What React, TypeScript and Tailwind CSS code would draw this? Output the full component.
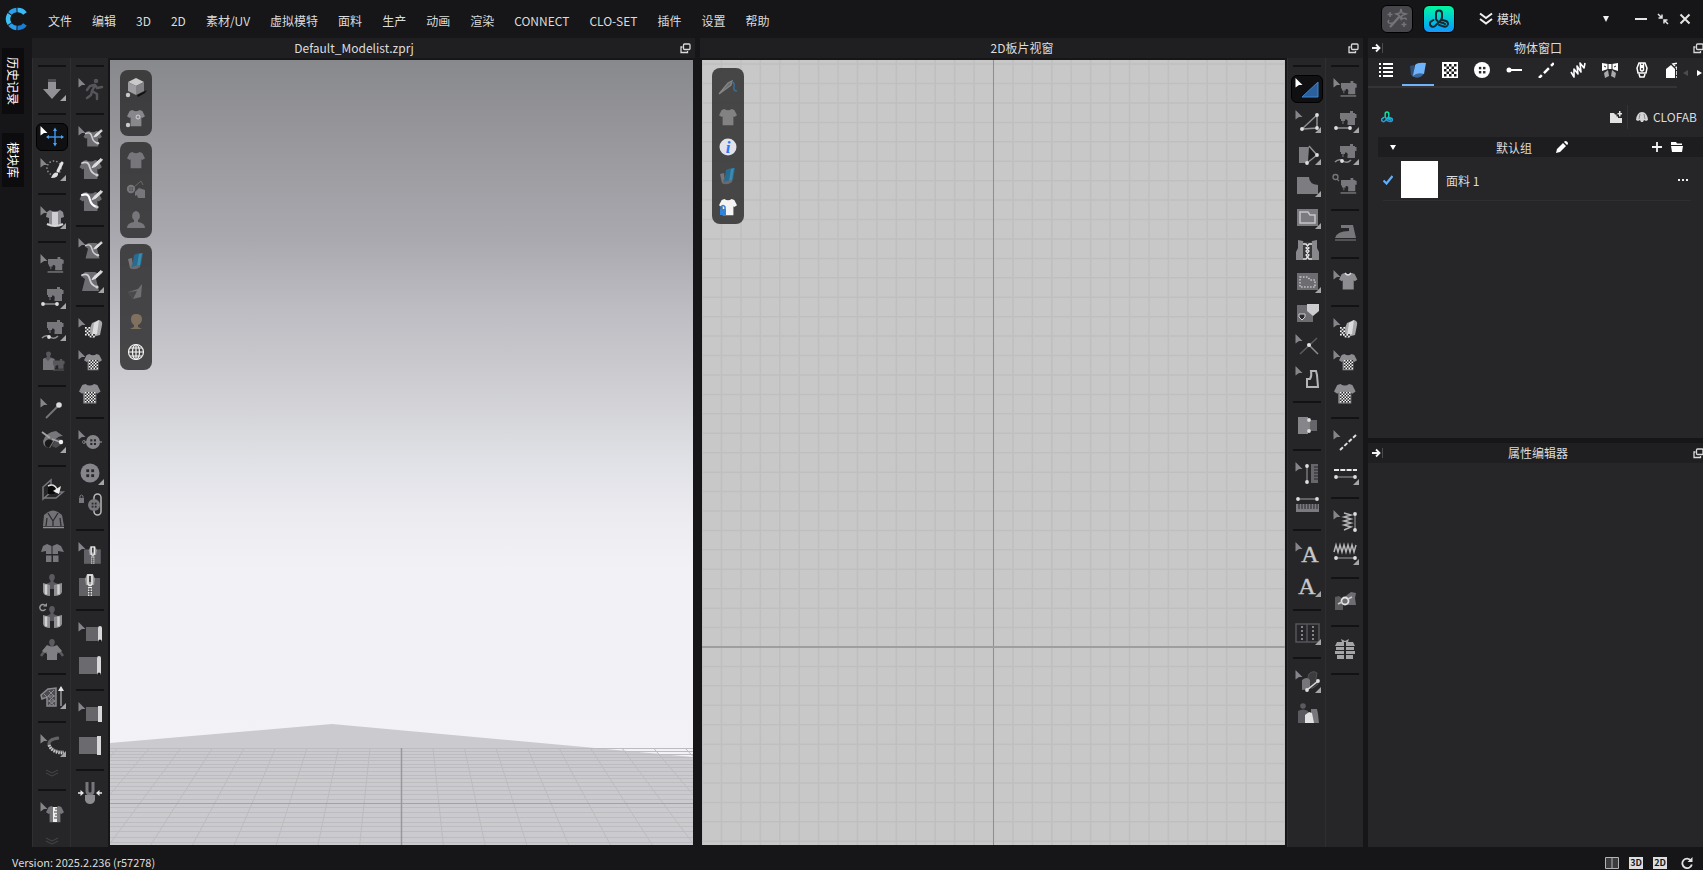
/**
 * App.tsx — CLO workspace shell: menu bar, 3D viewport, 2D pattern viewport,
 * object browser, property editor and status bar.
 *
 * Every toolbar icon is drawn on a 32×32 grid. The select arrow (top left) and
 * the "more tools" corner (bottom right) are added by <ToolButton>.
 */

import React from "react";

type Tool =
  | { kind: "sep" }
  | { kind: "more" }
  | { kind: "tool"; label: string; art: React.ReactNode; cursor?: boolean; corner?: boolean; active?: boolean };

const SEP: Tool = { kind: "sep" };
const MORE: Tool = { kind: "more" };

// flags: s = select arrow, c = corner triangle, a = active
const tool = (label: string, art: React.ReactNode, flags = ""): Tool => ({
  kind: "tool",
  label,
  art,
  cursor: flags.includes("s"),
  corner: flags.includes("c"),
  active: flags.includes("a"),
});

/* ---------- shared shapes ---------- */

interface ShapeProps {
  x: number;
  y: number;
  s?: number;
  fill?: string;
}

const TEE = "M6 0 Q10 3 14 0 L17 1 L20 7 L17 9 L16 8 V18 H4 V8 L3 9 L0 7 L3 1 Z";

const Tee: React.FC<ShapeProps> = ({ x, y, s = 1, fill = "#8c8c91" }) => (
  <path d={TEE} fill={fill} transform={`translate(${x} ${y}) scale(${s})`} />
);

const Machine: React.FC<ShapeProps & { base?: boolean }> = ({ x, y, s = 1, fill = "#77777c", base }) => (
  <g transform={`translate(${x} ${y}) scale(${s})`} fill={fill}>
    <path d="M0 2 H10 V0 H13 V2 H15 V3 H16.500 V7 H15 V14 H7.500 V12 Q8.500 8 5 8.500 V10 H3.500 V13 H2.500 V10 H1 V8 H0 Z" />
    {base && <path d="M-0.500 15 H16 V16.500 H-0.500 Z" />}
  </g>
);

const Checker: React.FC<{ x: number; y: number; cols: number; rows: number; size?: number }> = ({ x, y, cols, rows, size = 1.5 }) => (
  <g>
    <rect x={x} y={y} width={cols * size} height={rows * size} fill="#2a2a2c" />
    {Array.from({ length: cols * rows }, (_, i) => {
      const c = i % cols;
      const r = Math.floor(i / cols);
      return (c + r) % 2 === 0 ? <rect key={i} x={x + c * size} y={y + r * size} width={size} height={size} fill="#f6f6f6" /> : null;
    })}
  </g>
);

const Segment: React.FC<{ d: string; ends: number[][]; color?: string }> = ({ d, ends, color = "#8f8f93" }) => (
  <g>
    <path d={d} fill="none" stroke={color} strokeWidth="1.500" />
    {ends.map(([cx, cy]) => (
      <circle key={`${cx}-${cy}`} cx={cx} cy={cy} r="1.900" fill="#dededf" />
    ))}
  </g>
);

const Head: React.FC<{ x: number; y: number }> = ({ x, y }) => (
  <path d="M0 -4 C3.500 -4 3.500 1 1.500 2.500 V4 L6 6 V11 H-6 V6 L-1.500 4 V2.500 C-3.500 1 -3.500 -4 0 -4 Z" fill="#5b5b5f" transform={`translate(${x} ${y})`} />
);

/** Shirt with a drawn line and the pen that draws it */
const PenShirt: React.FC<{ small?: boolean; dress?: boolean; bright?: boolean }> = ({ small, dress, bright }) => (
  <g transform={small ? "translate(5 4) scale(.82)" : undefined}>
    {dress ? (
      <path d="M11 6 H21 L25 8 L22 13 L25 25 H8 L11 13 L7 10 Z" fill="#6e6e72" />
    ) : (
      <path d={TEE} fill="#6e6e72" transform="translate(5.500 6) scale(1.120 1.050)" />
    )}
    <path d="M8 9 C14 7 15 10 16 14 S19 20 23 21" fill="none" stroke={bright ? "#fff" : "#cfcfd1"} strokeWidth={bright ? 2.2 : 1.8} strokeLinecap="round" />
    <circle cx="23" cy="21" r="1.600" fill="#cfcfd1" />
    <path d="M18 13.500 L20 10.500 L27 4.500 L28.500 6 L21.500 12.500 Z" fill="#dededf" stroke="#dededf" />
  </g>
);

const FabricRoll: React.FC = () => (
  <g>
    <path d="M18 9 L25 6 Q29 7 28 11 L26 21 L18 23 Q14 20 16 14 Z" fill="#a9a9ac" />
    <path d="M20 9 L25 6 L23 20 L18 22 Z" fill="#dcdcdd" />
    <path d="M14 15 Q13 21 19 23 L21 21" fill="none" stroke="#8c8c90" strokeWidth="2" />
    <Checker x={11} y={13} cols={3} rows={5} size={1.7} />
    <Checker x={14} y={20} cols={4} rows={2} size={1.7} />
  </g>
);

const CheckerTee: React.FC<{ small?: boolean }> = ({ small }) =>
  small ? (
    <g>
      <Tee x={10} y={8} s={0.9} />
      <Checker x={15} y={14} cols={6} rows={6} />
    </g>
  ) : (
    <g>
      <Tee x={5} y={6} s={1.08} />
      <Checker x={11} y={14} cols={7} rows={7} />
    </g>
  );

const Button4: React.FC<{ cx: number; cy: number; r: number; hole?: string; fill?: string }> = ({ cx, cy, r, hole = "#2a2a2c", fill = "#85858a" }) => {
  const o = r * 0.26;
  return (
    <g>
      <circle cx={cx} cy={cy} r={r} fill={fill} />
      {[[-1, -1], [1, -1], [-1, 1], [1, 1]].map(([a, b]) => (
        <rect key={`${a}${b}`} x={cx + a * o - r * 0.13} y={cy + b * o - r * 0.13} width={r * 0.3} height={r * 0.3} fill={hole} />
      ))}
    </g>
  );
};

const Zipper: React.FC<{ small?: boolean }> = ({ small }) => (
  <g transform={small ? "translate(6 5) scale(.8)" : undefined}>
    <path d="M5 8 H26 V26 H5 Z" fill="#626266" />
    <path d="M13 4 H19 L21 9 L20 15 H12 L11 9 Z" fill="#9c9c9f" />
    <path d="M14 5 H18 V14 Q16 17 14 14 Z" fill="none" stroke="#e9e9ea" strokeWidth="1.500" />
    <path d="M16 6 V12" stroke="#2a2a2c" strokeWidth="1.500" />
    <path d="M16 17 V27" stroke="#e4e4e4" strokeWidth="4" strokeDasharray="1.500 1" />
    <path d="M16 18 V27" stroke="#333" strokeWidth="1" />
  </g>
);

const Piping: React.FC<{ small?: boolean; hole?: boolean }> = ({ small, hole }) =>
  small ? (
    <g>
      <rect x="12" y="9" width="12" height="14" fill="#66666a" />
      <rect x="24" y="8" width="4" height="16" rx={hole ? 2 : 0} fill="#d8d8da" />
      {hole && <circle cx="26" cy="23" r="1.500" fill="#1a1a1a" />}
    </g>
  ) : (
    <g>
      <rect x="5" y="7" width="18" height="17" fill="#6b6b6f" />
      <rect x="23" y="6" width="4" height="19" rx={hole ? 2 : 0} fill="#d8d8da" />
      {hole && <circle cx="25" cy="24" r="1.500" fill="#1a1a1a" />}
    </g>
  );

const WRAP = (
  <g>
    <Head x={16} y={8} />
    <path d="M7 13 L14 15 V26 Q8 26 7 22 Z" fill="#8f8f93" />
    <path d="M26 13 L18 15 V26 Q25 26 26 22 Z" fill="#8f8f93" />
    <path d="M10 14.500 V24.500 M22.500 14.500 V24.500" stroke="#d0d0d2" strokeWidth="2.500" />
  </g>
);

/* ---------- toolbars ---------- */

const LEFT_A: Tool[] = [
  SEP,
  tool("Simulate", (
    <g>
      <path d="M12 5 H20 V9 H12 Z" fill="#4e4e52" />
      <path d="M12 8 H20 V15 H25 L16 25 L7 15 H12 Z" fill="#919196" />
    </g>
  ), "c"),
  SEP,
  tool("Select / Move", (
    <g stroke="#3d8fe0" fill="#4aa3f0" strokeWidth="1.500">
      <path d="M11 15 H27 M19 7 V23" />
      <path d="M19 5.500 L21 9 H17 Z M19 24.500 L21 21 H17 Z M10 15 L13 13 V17 Z M28 15 L25 13 V17 Z" stroke="none" />
    </g>
  ), "sa"),
  tool("Brush select", (
    <g>
      <circle cx="18" cy="14" r="7" fill="none" stroke="#8e8e92" strokeWidth="1.500" strokeDasharray="1.500 2" />
      <path d="M26 9 L22 17" stroke="#e2e2e3" strokeWidth="3" strokeLinecap="round" />
      <path d="M15 24 Q18 17 22 19 Q23 24 15 24 Z" fill="#dededf" />
    </g>
  ), "sc"),
  SEP,
  tool("Fit garment", (
    <g>
      <path d="M14 8 Q19 11 24 8 L27 10 L28 15 L25 16 V23 H13 V16 L10 15 L11 10 Z" fill="#8d8d91" />
      <path d="M16 10 H22 V23 H16 Z" fill="#cfcfd1" />
      <path d="M11 22 Q19 26 27 22" stroke="#d6d6d8" strokeWidth="2" fill="none" />
    </g>
  ), "sc"),
  SEP,
  tool("Edit sewing", <Machine x={12} y={7} s={0.95} base />, "s"),
  tool("Segment sewing", (
    <g>
      <Machine x={11} y={5} />
      <Segment d="M7 22 H21" ends={[[7, 22], [21, 22]]} />
    </g>
  ), "c"),
  tool("Free sewing", (
    <g>
      <Machine x={11} y={6} />
      <Segment d="M6 24 Q10 20 14 23 T22 22" ends={[[13, 23]]} />
    </g>
  ), "c"),
  tool("Auto sewing", (
    <g>
      <path d="M10 8 a2.500 2.500 0 1 1 5 0 L14 11 L19 13 V24 H7 V13 L11 11 Z" fill="#58585c" />
      <path d="M9 12 L12 15 L15 12 L18 13 V24 H7 V13 Z" fill="#77777b" />
      <Machine x={17} y={13} s={0.7} fill="#58585c" base />
    </g>
  )),
  SEP,
  tool("Pin", (
    <g>
      <path d="M10 24 L22 12" stroke="#77777b" strokeWidth="1.800" />
      <circle cx="23" cy="11" r="2.800" fill="#dcdcdd" />
    </g>
  ), "s"),
  tool("Fold arrangement", (
    <g>
      <path d="M7 15 Q10 6 20 5 L27 10 Q22 10 19 14 L14 22 Q7 22 7 15 Z" fill="#77777b" />
      <path d="M20 13 Q25 11 26 18 L20 22 L16 20 Z" fill="#4c4c50" />
      <path d="M9 16 Q12 11 17 15 L13 22 Q8 21 9 16 Z" fill="#19191a" />
      <path d="M6 6 L14 12 M16 13 L24 16" stroke="#a4a4a7" strokeWidth="1.800" />
      <circle cx="25" cy="16" r="2.200" fill="#f0f0f0" />
    </g>
  ), "c"),
  SEP,
  tool("Reset 2D arrangement", (
    <g fill="none" stroke="#77777c" strokeWidth="1.500">
      <path d="M7 13 L15 6 V18 L7 25 Z M15 18 H27 L20 24 H8" />
      <path d="M12 12 Q18 9 22 15 L18 20 L12 20 Z" fill="#0b0b0c" stroke="none" />
      <path d="M12 12 Q18 9 21 15" stroke="#ddd" />
      <path d="M17 17 L25 12 L23 20 Z" fill="#eee" stroke="none" />
    </g>
  )),
  tool("Superimpose", (
    <g>
      <path d="M12 6 Q17 3 22 6 L26 9 L28 20 H7 L8 9 Z" fill="#727276" />
      <path d="M12 7 L17 15 L22 7 M17 15 V20 M11 12 L10 20 M24 12 L25 20" fill="none" stroke="#2e2e31" strokeWidth="1.300" />
      <path d="M7 21.500 H28" stroke="#8f8f93" strokeWidth="1.500" />
    </g>
  )),
  tool("Show pieces", (
    <g fill="#77777b">
      <path d="M11 6 L15.500 8 V16 H10 V13 L5 14 L7 8 Z M21 6 L16.500 8 V16 H22 V13 L28 14 L25 8 Z M10 17.500 H15.500 V24 H10 Z M17 17.500 H22.500 V24 H17 Z" />
    </g>
  )),
  tool("Arrangement points", WRAP),
  tool("Rearrange", (
    <g>
      {WRAP}
      <path d="M9 3.500 A3 3 0 1 0 9.500 7" stroke="#98989b" fill="none" strokeWidth="1.500" />
      <path d="M7 4.500 H11 V1 Z" fill="#98989b" />
    </g>
  )),
  tool("Drape", (
    <g>
      <Head x={16} y={9} />
      <path d="M5 22 L10 15 M27 22 L22 15" stroke="#5b5b5f" strokeWidth="2.500" />
      <path d="M11 11 L16 13 L21 11 L26 17 L23 19 L21 18 V26 H11 V18 L9 19 L6 17 Z" fill="#808084" />
    </g>
  )),
  SEP,
  tool("Lace", (
    <g>
      <path d="M12 7 L20 6 V24 H11 V15 L6 17 L5 13 Z" fill="#4c4c50" stroke="#8c8c90" strokeWidth="1.500" />
      <path d="M13 9 L18 14 L13 19 L18 23 M18 8 L12 14 L19 19 L13 23 M8 12 L11 15 M12 14 H19 M12 19 H19" fill="none" stroke="#8c8c90" strokeWidth="1" />
      <path d="M25 24 V9" stroke="#9a9a9d" strokeWidth="1.500" />
      <path d="M25 4 L28 9 H22 Z" fill="#e4e4e5" />
    </g>
  ), "c"),
  SEP,
  tool("Tape measure", (
    <g fill="none">
      <path d="M23 8 Q12 9 13 15 Q16 22 28 22" stroke="#636367" strokeWidth="3" />
      <path d="M13 15 Q16 23 28 23" stroke="#c9c9cb" strokeWidth="3" strokeDasharray="1.500 1" />
    </g>
  ), "sc"),
  MORE,
  SEP,
  tool("Garment measure", (
    <g>
      <Tee x={10} y={8} s={0.9} fill="#77777b" />
      <path d="M17 9 H21 V24 H17 Z" fill="#ededee" />
      <path d="M19 11 H21 M18 14 H21 M19 17 H21 M18 20 H21" stroke="#444" />
    </g>
  ), "s"),
  MORE,
];

const LEFT_B: Tool[] = [
  SEP,
  tool("Walk", (
    <g fill="none" stroke="#56565a" strokeWidth="2.500" strokeLinecap="round" strokeLinejoin="round">
      <circle cx="22" cy="7" r="1" />
      <path d="M21 11 L18 17 L23 20 V25 M18 17 L17 21 L13 24 M20 11 L16 12 L13 16 M21 11 L23 14 L28 13" />
    </g>
  ), "s"),
  SEP,
  tool("Edit 3D line", <PenShirt small />, "s"),
  tool("3D pen", <PenShirt />),
  tool("3D pen (garment)", <PenShirt bright />),
  SEP,
  tool("Edit avatar line", <PenShirt small dress />, "s"),
  tool("Avatar pen", <PenShirt dress />, "c"),
  SEP,
  tool("Edit texture", <FabricRoll />, "s"),
  tool("Transform graphic", <CheckerTee small />, "s"),
  tool("Graphic", <CheckerTee />),
  SEP,
  tool("Edit button", (
    <g>
      <path d="M10 16 H28" stroke="#77777b" strokeWidth="1.500" />
      <circle cx="10" cy="16" r="1.500" fill="none" stroke="#77777b" />
      <Button4 cx={19} cy={16} r={7} />
    </g>
  ), "s"),
  tool("Button", <Button4 cx={16} cy={15} r={9.5} />, "c"),
  tool("Fasten button", (
    <g>
      <path d="M5 8 H10 V13 H5 Z" fill="#77777b" />
      <path d="M6 8 V6 Q7.500 4 9 6 V8" fill="none" stroke="#77777b" />
      <rect x="20" y="4" width="7" height="21" rx="3.500" fill="none" stroke="#b8b8ba" strokeWidth="1.500" />
      <Button4 cx={20} cy={15} r={6} fill="#77777b" />
    </g>
  )),
  SEP,
  tool("Edit zipper", <Zipper small />, "s"),
  tool("Zipper", <Zipper />),
  SEP,
  tool("Edit piping", <Piping small hole />, "s"),
  tool("Piping", <Piping hole />),
  SEP,
  tool("Edit binding", <Piping small />, "s"),
  tool("Binding", <Piping />),
  SEP,
  tool("Steam", (
    <g>
      <path d="M13 4 V13 Q13 16 16 16 Q19 16 19 13 V4" stroke="#77777b" strokeWidth="3" fill="none" />
      <path d="M11 17 H21 V22 Q20 26 16 26 Q12 26 11 22 Z" fill="#8d8d91" />
      <path d="M4 15 H7 M25 15 H28" stroke="#e8e8e8" strokeWidth="1.500" />
      <path d="M6.500 12 L10 15 L6.500 18 Z M25.500 12 L22 15 L25.500 18 Z" fill="#e8e8e8" />
    </g>
  )),
];

const LETTER_A = (x: number, y: number) => (
  <text x={x} y={y} textAnchor="middle" fontSize="24" fontFamily="Liberation Serif, serif" fill="#c9c9cb" stroke="#c9c9cb" strokeWidth=".4">
    A
  </text>
);

const RIGHT_A: Tool[] = [
  SEP,
  tool("Transform pattern", <path d="M11 23 L27 8 V23 Z" fill="#2b5f9e" stroke="#3d87cf" />, "sa"),
  tool("Edit pattern", <Segment d="M11 23 L26 9 V22 Z" ends={[[11, 23], [26, 9], [26, 22]]} />, "sc"),
  tool("Fold", (
    <g>
      <path d="M8 9 H18 V25 H8 Z" fill="#808084" />
      <path d="M18 9 L26 17 L17 24 Z" fill="#1c1c1e" />
      <Segment d="M18 8 L26 17 L16 25" ends={[[26, 17], [16, 25]]} />
    </g>
  ), "c"),
  tool("Polygon", <path d="M6 7 H18 Q18 14 27 15 V24 H6 Z" fill="#7d7d81" />, "c"),
  tool("Internal polygon", (
    <g>
      <path d="M6 7 H27 V24 H6 Z" fill="#7b7b7f" />
      <path d="M9 10 H17 L19 13 H24 V21 H9 Z" fill="none" stroke="#c5c5c7" strokeWidth="1.500" />
    </g>
  ), "c"),
  tool("Lacing", (
    <g>
      <path d="M7 6 L12 7 L14 11 V26 H5 V18 L7 14 Z M26 6 L21 7 L19 11 V26 H28 V18 L26 14 Z" fill="#88888c" />
      <path d="M12 8 H21 V26 H12 Z" fill="#39393c" />
      <path d="M12 10 H15 L18 14 L15 17 L18 21 L15 25 H12 M21 10 H18 L15 14 L18 17 L15 21 L18 25 H21" stroke="#e4e4e5" strokeWidth="1.300" fill="none" />
    </g>
  )),
  tool("Base line", (
    <g>
      <path d="M6 7 H27 V24 H6 Z" fill="#6d6d71" />
      <path d="M9 11 H17 L19 14 H24 V21 H9 Z" fill="none" stroke="#c5c5c7" strokeWidth="1.500" strokeDasharray="1.500 1.500" />
    </g>
  ), "c"),
  tool("Pocket", (
    <g>
      <path d="M6 7 H22 V24 H6 Z" fill="#6d6d71" />
      <path d="M16 6 H28 V13 L22 18 L16 13 Z" fill="#cdcdcf" />
      <path d="M8 16 H14 V19 L11 22 L8 19 Z" fill="#2a2a2c" stroke="#d0d0d2" />
    </g>
  )),
  tool("Notch", (
    <g>
      <path d="M9 24 L26 8" stroke="#5b5b5f" strokeWidth="1.500" />
      <path d="M18 15 L27 24" stroke="#8c8c90" strokeWidth="1.500" />
      <circle cx="18" cy="15" r="2" fill="#e4e4e5" />
    </g>
  ), "s"),
  tool("Seam allowance", <path d="M16 25 V17 H19 Q21 14 20 9 H25 L26 13 L27 25 Z" fill="none" stroke="#b5b5b7" strokeWidth="2" />, "s"),
  SEP,
  tool("Symmetry", (
    <g>
      <path d="M7 7 H17 V24 H7 Z" fill="#85858a" />
      <path d="M17 10 H26 V21 H17 Z" fill="#66666a" />
      <Segment d="M18 10 V21" ends={[[18, 10], [18, 21]]} />
    </g>
  )),
  SEP,
  tool("Edit 2D measure", (
    <g>
      <Segment d="M16 8 V24" ends={[[16, 8], [16, 24]]} color="#77777b" />
      <path d="M20 6 H27 V25 H20 Z" fill="#67676b" />
      <path d="M23 9 H27 M23 12 H27 M23 15 H27 M23 18 H27 M23 21 H27" stroke="#27272a" />
    </g>
  ), "s"),
  tool("2D measure", (
    <g>
      <Segment d="M7 9 H26" ends={[[7, 9], [26, 9]]} color="#77777b" />
      <path d="M5 14 H28 V22 H5 Z" fill="#7b7b7f" />
      <path d="M8 14 V19 M11 14 V19 M14 14 V19 M17 14 V19 M20 14 V19 M23 14 V19 M26 14 V19" stroke="#27272a" />
    </g>
  )),
  SEP,
  tool("Edit annotation", LETTER_A(19, 24), "s"),
  tool("Annotation", LETTER_A(16, 24), "c"),
  SEP,
  tool("Pleats", (
    <g fill="none" stroke="#56565a" strokeWidth="1.500">
      <path d="M5 6 H28 V24 H5 Z M16 6 V24" />
      <path d="M11 8 V22 M22 8 V22" stroke="#a5a5a8" strokeDasharray="2 2" />
    </g>
  ), "c"),
  SEP,
  tool("Grading", (
    <g>
      <path d="M18 8 Q22 4 26 7 L25 12 L27 18 L22 22 H14 Z" fill="#3c3c3f" stroke="#525256" />
      <path d="M11 14 Q16 10 19 14 V23 L11 24 Z" fill="#77777b" />
      <Segment d="M16 24 L27 15" ends={[[16, 24], [27, 15]]} color="#dcdcdd" />
    </g>
  ), "sc"),
  tool("Avatar pieces", (
    <g>
      <circle cx="12" cy="8" r="2.800" fill="#5b5b5f" />
      <path d="M7 13 Q12 10 17 13 V25 H7 Z" fill="#5b5b5f" />
      <path d="M20 11 H26 L27 16 L28 25 H20 Z" fill="#77777b" />
      <path d="M14 17 L18 14 L21 15 L23 25 H14 Z" fill="#e2e2e3" />
    </g>
  )),
];

const RIGHT_B: Tool[] = [
  SEP,
  tool("Edit sewing 2D", <Machine x={12} y={7} s={0.95} base />, "s"),
  tool("Segment sewing 2D", (
    <g>
      <Machine x={11} y={5} />
      <Segment d="M7 22 H21" ends={[[7, 22], [21, 22]]} />
    </g>
  ), "c"),
  tool("Free sewing 2D", (
    <g>
      <Machine x={11} y={6} />
      <Segment d="M6 24 Q10 20 14 23 T22 22" ends={[[13, 23]]} />
    </g>
  ), "c"),
  tool("Check sewing length", (
    <g>
      <Machine x={12} y={8} s={0.95} base />
      <circle cx="6.500" cy="7" r="2.500" fill="none" stroke="#77777b" strokeWidth="1.300" />
      <path d="M8 9 L10 11" stroke="#77777b" strokeWidth="1.300" />
    </g>
  )),
  SEP,
  tool("Iron", (
    <g>
      <path d="M12 7 H24 L27 20 H6 Q8 13 20 13 V10 H12 Z" fill="#77777b" />
      <path d="M6 22 H27" stroke="#626266" strokeWidth="1.500" />
    </g>
  )),
  SEP,
  tool("Edit fabric", (
    <g>
      <Tee x={10} y={7} s={0.92} />
      <path d="M16 7 Q19 11 22 7" fill="none" stroke="#dededf" strokeWidth="1.500" />
    </g>
  ), "s"),
  SEP,
  tool("Edit texture 2D", <FabricRoll />, "s"),
  tool("Transform graphic 2D", <CheckerTee small />, "s"),
  tool("Graphic 2D", <CheckerTee />),
  SEP,
  tool("Edit topstitch", <path d="M11 24 L28 8" stroke="#dededf" strokeWidth="2" strokeDasharray="4 2" />, "s"),
  tool("Segment topstitch", (
    <g>
      <path d="M5 12 H28" stroke="#e8e8e8" strokeWidth="2" strokeDasharray="5 1.300" />
      <Segment d="M7 19 H26" ends={[[7, 19], [26, 19]]} color="#77777b" />
    </g>
  ), "c"),
  SEP,
  tool("Edit shirring", (
    <g>
      <path d="M15 7 L22 9 L15 11 L22 13 L15 15 L22 17 L15 19 L22 21 L15 24" fill="none" stroke="#b5b5b7" strokeWidth="1.500" />
      <Segment d="M26 8 V24" ends={[[26, 8], [26, 24]]} color="#77777b" />
    </g>
  ), "s"),
  tool("Segment shirring", (
    <g>
      <path d="M5 14 L7 7 L9 14 L11 7 L13 14 L15 7 L17 14 L19 7 L21 14 L23 7 L25 14 L27 7" fill="none" stroke="#b5b5b7" strokeWidth="1.500" />
      <Segment d="M7 20 H26" ends={[[7, 20], [26, 20]]} color="#77777b" />
    </g>
  ), "c"),
  SEP,
  tool("Trim link", (
    <g>
      <path d="M6 11 L10 10 L14 13 V24 H6 Z" fill="#5b5b5f" />
      <path d="M18 9 L22 6 L27 7 L26 12 L27 19 H14 V13 Z" fill="#6e6e72" />
      <circle cx="16" cy="15" r="3.500" fill="none" stroke="#e4e4e5" strokeWidth="1.800" />
      <path d="M9 18 L13 16 M19 13 L23 11" stroke="#c9c9cb" strokeWidth="1.800" />
    </g>
  )),
  SEP,
  tool("Pack", (
    <g fill="#a5a5a8">
      <path d="M12 5 L16 7 L20 5 L19 8 H13 Z" />
      <path d="M8 8 H15 V12 H6 Z M17 8 H24 L26 12 H17 Z M7 13 H15 V16 H7 Z M17 13 H25 V16 H17 Z M6 17 H15 V20 H6 Z M17 17 H26 V20 H17 Z M8 21 H15 V25 H8 Z M17 21 H24 V25 H17 Z" />
    </g>
  )),
  SEP,
];

const ToolButton: React.FC<{ item: Tool }> = ({ item }) => {
  if (item.kind === "sep") {
    return (
      <div className="flex h-4 shrink-0 items-center">
        <hr className="w-7 border-t-2 border-[#121214]" />
      </div>
    );
  }
  if (item.kind === "more") {
    return (
      <svg className="h-5 w-4 shrink-0" viewBox="0 0 16 20" fill="none" stroke="#46464a" aria-hidden="true">
        <path d="M2 8 L8 11 L14 8 M2 11 L8 14 L14 11" />
      </svg>
    );
  }
  return (
    <button type="button" aria-label={item.label} className="relative flex h-8 w-8 shrink-0 items-center justify-center">
      {item.active && <span className="absolute inset-x-0 top-px h-7 rounded-md border border-black bg-[#101012]" />}
      <svg className="relative h-8 w-8" viewBox="0 0 32 32" aria-hidden="true">
        {item.art}
        {item.cursor && <path d="M4.500 4 L11.500 11 H8 L4.500 13.500 Z" fill={item.active ? "#fff" : "#85858a"} />}
        {item.corner && <path d="M24 27 L30 21 V27 Z" fill="#a5a5a8" />}
      </svg>
    </button>
  );
};

const Toolbar: React.FC<{ tools: Tool[]; label: string }> = ({ tools, label }) => (
  <div role="toolbar" aria-label={label} className="flex flex-1 flex-col items-center overflow-hidden border-l border-[#2f2f32] bg-[#262629]">
    {tools.map((t, i) => (
      <ToolButton key={i} item={t} />
    ))}
  </div>
);

/* ---------- viewport palettes ---------- */

const SHEET = (
  <g>
    <path d="M7 12 L11 11 L12 22 L9 21 Z" fill="#77777b" />
    <path d="M9 21 Q14 24 19 20 L20 14 H12 Z" fill="#6a6a6e" />
    <path d="M13 8 Q16 6 22 6 L20 18 Q15 18 11 20 Z" fill="#276b93" />
    <path d="M18 7 L21 6 L19 18 L16 18.500 Z" fill="#3c8bab" />
  </g>
);

const PALETTE_3D: { label: string; art: React.ReactNode }[][] = [
  [
    {
      label: "Display environment",
      art: (
        <g>
          <path d="M16 22 L26 17 L24 20 L17 24 Z" fill="#111" />
          <path d="M15 5 L23 9 L15 13 L7 9 Z" fill="#c9c9cb" />
          <path d="M7 9 L15 13 V22 L7 18 Z" fill="#9d9da0" />
          <path d="M23 9 L15 13 V22 L23 18 Z" fill="#828286" />
          <circle cx="7" cy="22" r="2.200" fill="#c9c9cb" />
        </g>
      ),
    },
    {
      label: "Display garment",
      art: (
        <g>
          <Tee x={6} y={7} s={0.9} fill="#88888c" />
          <circle cx="17" cy="14" r="2" fill="none" stroke="#d0d0d2" />
          <circle cx="7" cy="22" r="2.200" fill="#c9c9cb" />
        </g>
      ),
    },
  ],
  [
    { label: "Garment", art: <Tee x={6} y={7} s={0.9} fill="#77777b" /> },
    {
      label: "Trims",
      art: (
        <g>
          <Button4 cx={10} cy={14} r={4.2} hole="#444" fill="#77777b" />
          <path d="M13 12 L20 6 L22 10" stroke="#68686c" fill="none" />
          <path d="M14 17 L18 13 L24 15 V23 H17 L16 20 L14 21 Z" fill="#77777b" />
        </g>
      ),
    },
    { label: "Avatar", art: <path d="M15 6 a4.500 5 0 0 1 2 9 V17 Q24 18 24 23 H6 Q6 18 13 17 V15 A4.500 5 0 0 1 15 6 Z" fill="#77777b" /> },
  ],
  [
    { label: "Fabric texture", art: SHEET },
    {
      label: "Fabric thickness",
      art: (
        <g>
          <path d="M7 15 L17 12 L21 7 L20 20 L12 22 Z" fill="#707074" />
          <path d="M7 15 L16 14 L12 22 Z" fill="#4a4a4c" />
        </g>
      ),
    },
    { label: "Avatar texture", art: <path d="M15 7 Q21 7 21 12 Q21 16 17 18 V20 L21 22 H9 L13 20 V18 Q10 16 10 12 Q10 7 15 7 Z" fill="#80705f" /> },
    {
      label: "Grid",
      art: (
        <g fill="none" stroke="#f4f4f4" strokeWidth="1.200">
          <circle cx="15" cy="15" r="7.500" />
          <ellipse cx="15" cy="15" rx="3.500" ry="7.500" />
          <path d="M15 7.500 V22.500 M7.500 15 H22.500 M9 11 H21 M9 19 H21" />
        </g>
      ),
    },
  ],
];

const PALETTE_2D = [
  {
    label: "Show sewing",
    art: (
      <g fill="none">
        <path d="M6 23 L15 12 L19 10 L18 14 Z" stroke="#858585" strokeWidth="1.300" fill="#6c6c6c" />
        <path d="M19 11 Q22 12 21 16 T24 20" stroke="#3c6e92" strokeWidth="1.500" />
      </g>
    ),
  },
  { label: "Show garment", art: <Tee x={6} y={8} s={0.9} fill="#828282" /> },
  {
    label: "Show information",
    art: (
      <g>
        <circle cx="15" cy="16" r="8.500" fill="#e2e2ea" />
        <text x="15" y="22" textAnchor="middle" fontSize="17" fontStyle="italic" fontWeight="bold" fontFamily="Liberation Serif, serif" fill="#2b76f6">
          i
        </text>
      </g>
    ),
  },
  { label: "Show texture", art: <g transform="translate(0 1)">{SHEET}</g> },
  {
    label: "Lock pattern",
    art: (
      <g>
        <Tee x={6} y={8} s={0.9} fill="#f4f4f4" />
        <path d="M7 18 H13 V24 H7 Z" fill="#2f83d8" />
        <path d="M8 18 V16 Q10 13 12 16 V18" fill="none" stroke="#2f83d8" strokeWidth="1.500" />
      </g>
    ),
  },
];

const Palette: React.FC<{ items: { label: string; art: React.ReactNode }[] }> = ({ items }) => (
  <div className="flex w-8 flex-col items-center rounded-lg bg-[#2f2f30]/85 py-[3px]">
    {items.map((it) => (
      <button key={it.label} type="button" aria-label={it.label}>
        <svg className="h-[30px] w-[30px]" viewBox="0 0 30 30" aria-hidden="true">
          {it.art}
        </svg>
      </button>
    ))}
  </div>
);

/* ---------- viewport backdrops ---------- */

// y positions of the floor lines, closing up towards the horizon
const FLOOR_ROWS = [688, 691, 694, 697, 700, 704, 707, 711, 715, 718, 722, 726, 730, 734, 739, 747, 752, 757, 762, 766, 771, 777, 782];

const Floor: React.FC = () => (
  <svg className="absolute inset-0 h-full w-full" viewBox="0 0 583 785" preserveAspectRatio="xMidYMax slice" aria-hidden="true">
    <path d="M0 683 L222 664 L583 697 V785 H0 Z" fill="#cbcacf" />
    <g stroke="#bcbcbe" strokeWidth="1">
      {FLOOR_ROWS.map((y) => (
        <path key={y} d={`M0 ${y}.5 H583`} />
      ))}
      {Array.from({ length: 21 }, (_, i) => i - 10).map((n) => (
        <path key={n} d={`M${291.5 + n * 31.5} 688 L${291.5 + n * 41.8} 785`} />
      ))}
    </g>
    <path d="M0 743.500 H583" stroke="#a2a2a3" />
    <path d="M291.500 688 V785" stroke="#98989a" strokeWidth="1.500" />
  </svg>
);

const GRID_STEP = 19.43;

const PatternGrid: React.FC = () => (
  <svg className="absolute inset-0 h-full w-full" viewBox="0 0 583 785" preserveAspectRatio="xMidYMid slice" aria-hidden="true">
    <g stroke="#bfbfbf" strokeWidth="1.500">
      {Array.from({ length: 31 }, (_, i) => 291.5 + (i - 15) * GRID_STEP).map((x) => (
        <path key={x} d={`M${x} 0 V785`} />
      ))}
      {Array.from({ length: 42 }, (_, i) => 587 + (i - 31) * GRID_STEP).map((y) => (
        <path key={y} d={`M0 ${y} H583`} />
      ))}
    </g>
    <path d="M291.500 0 V785" stroke="#8f8f8f" />
    <path d="M0 587 H583" stroke="#9e9e9e" strokeWidth="2" />
  </svg>
);

/* ---------- chrome ---------- */

const PopOutIcon: React.FC = () => (
  <svg className="h-[11px] w-[11px]" viewBox="0 0 11 11" fill="none" stroke="#d8d8d8" strokeWidth="1.300" aria-hidden="true">
    <rect x="3.500" y="1" width="6.500" height="5.500" rx="1" />
    <path d="M2.500 4 H1 V9.500 H7.500 V8" />
  </svg>
);

const PanelHeader: React.FC<{ title: string; dock?: boolean }> = ({ title, dock }) => (
  <header className="flex h-5 shrink-0 items-center bg-[#1f1f22]">
    {dock && (
      <button type="button" aria-label="Collapse panel" className="w-[19px] pl-[3px]">
        <svg className="h-3 w-3" viewBox="0 0 12 12" fill="none" stroke="#f4f4f4" strokeWidth="1.800" aria-hidden="true">
          <path d="M1 6 H8 M5 2.500 L8.500 6 L5 9.500" />
          <path d="M11.500 1 V11" stroke="#4a4a4d" strokeWidth="1" />
        </svg>
      </button>
    )}
    <h2 className="flex-1 text-center leading-5">{title}</h2>
    <button type="button" aria-label={`Undock ${title}`} className="flex w-[19px] justify-center">
      <PopOutIcon />
    </button>
  </header>
);

/** Trefoil knot used by the simulate button and the connect link */
const Knot: React.FC<{ className: string; stroke: string; width?: number }> = ({ className, stroke, width = 2 }) => (
  <svg className={className} viewBox="0 0 20 20" fill="none" stroke={stroke} strokeWidth={width} strokeLinecap="round" aria-hidden="true">
    <defs>
      <linearGradient id="knot" x1="0" y1="0" x2="0" y2="20" gradientUnits="userSpaceOnUse">
        <stop stopColor="#00f58c" />
        <stop offset=".5" stopColor="#18c4c8" />
        <stop offset="1" stopColor="#2a86f0" />
      </linearGradient>
    </defs>
    <path d="M7 10 V4.500 a3 3 0 0 1 6 0 V8 Q13 11 10 13 L6 17 a2.800 2.800 0 0 1 -4 -4.500 L4.500 11" />
    <path d="M7 10 Q8 13 12 13.500 Q15 14 16 15 M13 11 L17 12 a2.900 2.900 0 0 1 -2 5.500 L10 16" />
  </svg>
);

const MENU = ["文件", "编辑", "3D", "2D", "素材/UV", "虚拟模特", "面料", "生产", "动画", "渲染", "CONNECT", "CLO-SET", "插件", "设置", "帮助"];

const MenuBar: React.FC = () => (
  <header className="flex h-[38px] shrink-0 items-center">
    <svg className="ml-[5px] mr-[19px] h-6 w-6" viewBox="0 0 24 24" fill="none" strokeWidth="4.500" aria-label="CLO">
      <path d="M20 6.500 A9 9 0 0 0 12.500 3" stroke="#3cb8f5" />
      <path d="M11.500 3 A9 9 0 0 0 5 6.500" stroke="#2aa0ea" />
      <path d="M4.500 7.200 A9 9 0 0 0 4.500 16.800" stroke="#3fc0f5" />
      <path d="M5 17.500 A9 9 0 0 0 11.500 21" stroke="#2b9bea" />
      <path d="M12.500 21 A9 9 0 0 0 20 17.500" stroke="#1a7ed8" />
    </svg>
    <nav className="flex gap-5 pt-1">
      {MENU.map((m) => (
        <button key={m} type="button" className="whitespace-nowrap leading-4">
          {m}
        </button>
      ))}
    </nav>
    <div className="ml-auto flex items-center">
      <button type="button" aria-label="Magic wand" className="flex h-7 w-8 items-center justify-center rounded-md border border-black bg-[#47474b]">
        <svg className="h-6 w-6" viewBox="0 0 24 24" fill="none" stroke="#737378" strokeWidth="1.500" aria-hidden="true">
          <path d="M5 20 L15 9" strokeWidth="2.500" />
          <path d="M16 2 L17 6 L21 7 L17 8.500 L16 12 L14.500 8.500 L11 7 L15 6 Z M5 5 V10 M2.500 7.500 H7.500 M19 15 V20 M16.500 17.500 H21.500" />
          <path d="M4 13 Q1 17 8 16 M16 12 Q22 10 21 13" />
        </svg>
      </button>
      <button type="button" aria-label="Simulation" className="ml-[10px] flex h-7 w-8 items-center justify-center rounded-md border border-black bg-linear-to-b from-[#00f79a] to-[#1c94ff]">
        <Knot className="h-5 w-5" stroke="#14262e" />
      </button>
      <svg className="ml-6 h-[14px] w-[14px]" viewBox="0 0 14 14" fill="none" stroke="#f0f0f0" strokeWidth="2" aria-hidden="true">
        <path d="M1 1.500 L7 6 L13 1.500 M1 7 L7 11.500 L13 7" />
      </svg>
      <div className="relative ml-1 flex items-center">
        <select aria-label="Mode" className="w-[116px] appearance-none bg-transparent leading-5 outline-none">
          <option>模拟</option>
        </select>
        <svg className="pointer-events-none absolute right-[3px] h-[6px] w-2" viewBox="0 0 8 6" fill="#f0f0f0" aria-hidden="true">
          <path d="M1 0 H7 L4 6 Z" />
        </svg>
      </div>
      <button type="button" aria-label="Minimize" className="ml-[22px]">
        <svg className="h-3 w-3" viewBox="0 0 12 12" stroke="#e4e4e4" strokeWidth="2" aria-hidden="true">
          <path d="M0 6 H12" />
        </svg>
      </button>
      <button type="button" aria-label="Restore" className="ml-[10px]">
        <svg className="h-3 w-3" viewBox="0 0 12 12" fill="none" stroke="#e4e4e4" strokeWidth="1.500" aria-hidden="true">
          <path d="M1 1 L5 5 M5 1.500 V5 H1.500 M11 11 L7 7 M7 10.500 V7 H10.500" />
        </svg>
      </button>
      <button type="button" aria-label="Close" className="ml-[10px] mr-3">
        <svg className="h-3 w-3" viewBox="0 0 12 12" stroke="#e4e4e4" strokeWidth="2" aria-hidden="true">
          <path d="M1.500 1.500 L10.500 10.500 M10.500 1.500 L1.500 10.500" />
        </svg>
      </button>
    </div>
  </header>
);

const OBJECT_TABS: { label: string; art: React.ReactNode }[] = [
  { label: "Scene", art: <path d="M1 2 H3 M5 2 H15 M1 6 H3 M5 6 H15 M1 10 H3 M5 10 H15 M1 14 H3 M5 14 H15" stroke="#fff" strokeWidth="2" /> },
  {
    label: "Fabric",
    art: (
      <g>
        <path d="M0 4 L4 3 L4 15 L1 13 Z" fill="#2f4f77" />
        <path d="M2 14 Q8 18 13 13 L14 9 H4 Z" fill="#3a6699" />
        <path d="M5 3 Q8 0 16 1 L14 12 Q7 10 3 14 Z" fill="#6fb3fa" />
      </g>
    ),
  },
  {
    label: "Graphic",
    art: (
      <g>
        <path d="M0 0 H16 V16 H0 Z" fill="#fff" />
        {Array.from({ length: 25 }, (_, i) => i).filter((i) => i % 2 === 0).map((i) => (
          <rect key={i} x={2 + (i % 5) * 2.5} y={2 + Math.floor(i / 5) * 2.5} width="2.500" height="2.500" fill="#19191b" />
        ))}
      </g>
    ),
  },
  { label: "Button", art: <Button4 cx={8} cy={8} r={8} fill="#fff" /> },
  {
    label: "Buttonhole",
    art: (
      <g>
        <circle cx="3" cy="8" r="2.500" fill="#fff" />
        <path d="M3 8 H16" stroke="#fff" strokeWidth="2" />
      </g>
    ),
  },
  { label: "Topstitch", art: <path d="M1 16 L16 1" stroke="#fff" strokeWidth="2.500" strokeDasharray="4 3 7 3" /> },
  { label: "Puckering", art: <path d="M1 10 L4 15 L4 7 L8 12 L7 4 L11 10 L10 1 L14 6 L15 1" fill="none" stroke="#fff" strokeWidth="1.600" strokeLinejoin="round" /> },
  {
    label: "Trim",
    art: (
      <g>
        <path d="M0 1 L6 2 H10 L16 1 V9 L10 7 H6 L0 9 Z" fill="#fff" />
        <path d="M6 8 L2 11 L3 16 L7 14 Z M10 8 L14 11 L13 16 L9 14 Z" fill="#a9a9ac" />
        <path d="M6 2 V8 M10 2 V8 M2 4 L4 5 M14 4 L12 5" stroke="#27272a" />
      </g>
    ),
  },
  {
    label: "Zipper",
    art: (
      <g fill="none" stroke="#fff" strokeWidth="1.500">
        <path d="M5 1 H11 L13 6 L12 11 H4 L3 6 Z" />
        <path d="M6.500 1 V8 Q8 10 9.500 8 V1 M8 3 V6" />
        <path d="M5 12 L6 15 H10 L11 12" />
      </g>
    ),
  },
  {
    label: "Labels",
    art: (
      <g>
        <path d="M0 7 L5 3 L9 7 V16 H0 Z" fill="#fff" />
        <path d="M7 2 L12 1 L16 4 V16 H11 V6 Z" fill="none" stroke="#fff" strokeWidth="1.500" strokeDasharray="4 1" />
      </g>
    ),
  },
];

const ObjectPanel: React.FC = () => (
  <section className="flex h-[400px] flex-col bg-[#262629]">
    <PanelHeader title="物体窗口" dock />
    <div className="flex h-[30px] shrink-0">
      <div role="tablist" className="flex w-[309px] overflow-hidden border-b-2 border-[#343437] pl-0.5">
        {OBJECT_TABS.map((t, i) => (
          <button
            key={t.label}
            type="button"
            role="tab"
            aria-label={t.label}
            aria-selected={i === 1}
            className={`flex w-8 shrink-0 justify-center pt-1 ${i === 1 ? "bg-[linear-gradient(#6fb3fa,#6fb3fa)] bg-[length:100%_2px] bg-bottom bg-no-repeat" : ""}`}
          >
            <svg className="h-4 w-4" viewBox="0 0 16 16" aria-hidden="true">
              {t.art}
            </svg>
          </button>
        ))}
      </div>
      <button type="button" aria-label="Previous tabs" className="flex w-4 items-center justify-center">
        <svg className="h-[6px] w-[5px]" viewBox="0 0 5 6" fill="#4c4c50" aria-hidden="true">
          <path d="M5 0 V6 L0 3 Z" />
        </svg>
      </button>
      <button type="button" aria-label="Next tabs" className="flex w-3 items-center justify-center">
        <svg className="h-[6px] w-[5px]" viewBox="0 0 5 6" fill="#fff" aria-hidden="true">
          <path d="M0 0 V6 L5 3 Z" />
        </svg>
      </button>
    </div>

    <div className="flex h-[49px] shrink-0 items-center pl-[13px] pt-[9px]">
      <Knot className="h-3 w-3" stroke="url(#knot)" width={2.5} />
      <button type="button" aria-label="Add folder" className="ml-auto">
        <svg className="h-3 w-3" viewBox="0 0 12 12" fill="#e2e2e2" aria-hidden="true">
          <path d="M0 2 H4 L5 3.500 H6.500 V5.500 H8 V7 H12 V12 H0 Z M9 0 H10.500 V2 H12 V3.500 H10.500 V5.500 H9 V3.500 H7.500 V2 H9 Z" />
        </svg>
      </button>
      <span className="ml-[5px] h-6 w-px bg-[#333336]" />
      <a href="#clofab" className="ml-2 mr-[11px] flex items-center gap-[5px] leading-5">
        <svg className="h-3 w-3" viewBox="0 0 12 12" aria-hidden="true">
          <path d="M0 9 Q1 1 6 1 Q11 1 12 9 L10 10 L8 9 L7 11 H5 L4 9 L2 10 Z" fill="#d4d4d6" />
          <path d="M4 3 L3 8 M8 3 L9 8" stroke="#8a8a8d" />
        </svg>
        CLOFAB
      </a>
    </div>

    <div className="ml-[10px] flex h-5 shrink-0 items-center bg-[#1d1d20] pl-3">
      <button type="button" aria-label="Collapse group">
        <svg className="h-[5px] w-[6px]" viewBox="0 0 6 5" fill="#fff" aria-hidden="true">
          <path d="M0 0 H6 L3 5 Z" />
        </svg>
      </button>
      <h3 className="ml-auto pt-0.5 leading-4">默认组</h3>
      <button type="button" aria-label="Rename group" className="ml-6">
        <svg className="h-3 w-3" viewBox="0 0 12 12" fill="#fff" aria-hidden="true">
          <path d="M0 12 L1 8 L7 2 L10 5 L4 11 Z M8 1 L9 0 Q12 0 12 3 L11 4 Z" />
        </svg>
      </button>
      <button type="button" aria-label="Add fabric" className="ml-[83px]">
        <svg className="h-3 w-3" viewBox="0 0 12 12" stroke="#f2f2f2" strokeWidth="1.800" aria-hidden="true">
          <path d="M6 1 V11 M1 6 H11" />
        </svg>
      </button>
      <button type="button" aria-label="Open folder" className="ml-2 mr-[25px]">
        <svg className="h-3 w-3" viewBox="0 0 12 12" fill="#fff" aria-hidden="true">
          <path d="M0 1 H5 L6 2.500 H11 V4 H0 Z M0 5 H12 L11 11 H1 Z" />
        </svg>
      </button>
    </div>

    <div className="ml-[15px] mr-[17px] flex h-11 shrink-0 items-center border-b border-[#2e2e31] pt-0.5">
      <svg className="h-[10px] w-[10px]" viewBox="0 0 10 10" fill="none" stroke="#5eb0ff" strokeWidth="2.200" aria-hidden="true">
        <path d="M0.500 5.500 L3.500 8.500 L9.500 1" />
      </svg>
      <span className="ml-2 h-[37px] w-[37px] bg-white" />
      <span className="ml-2 pt-0.5 leading-5">面料 1</span>
      <button type="button" aria-label="More" className="ml-auto mr-[3px]">
        <svg className="h-1 w-[10px]" viewBox="0 0 10 4" fill="#f0f0f0" aria-hidden="true">
          <path d="M0 1 H2 V3 H0 Z M4 1 H6 V3 H4 Z M8 1 H10 V3 H8 Z" />
        </svg>
      </button>
    </div>
  </section>
);

const StatusBar: React.FC = () => (
  <footer className="flex h-[23px] shrink-0 items-center pl-3 pr-[10px] pt-2">
    <span className="text-[11px] leading-[15px]">Version: 2025.2.236 (r57278)</span>
    <div className="ml-auto flex items-center gap-[10px]">
      <button type="button" aria-label="Split view">
        <svg className="h-3 w-[14px]" viewBox="0 0 14 12" fill="#3c3c3f" stroke="#b4b4b6" aria-hidden="true">
          <path d="M.5 .5 H13.500 V11.500 H.5 Z M7 1 V11" />
        </svg>
      </button>
      {["3D", "2D"].map((v) => (
        <button key={v} type="button" className="h-3 w-[14px] bg-[#dededf] text-center text-[9px] font-bold leading-3 text-[#161618]">
          {v}
        </button>
      ))}
      <button type="button" aria-label="Reset layout" className="ml-1">
        <svg className="h-3 w-3" viewBox="0 0 12 12" fill="none" stroke="#e2e2e3" strokeWidth="1.800" aria-hidden="true">
          <path d="M10 3.500 A4.800 4.800 0 1 0 10.800 7.500" />
          <path d="M11.500 0 V5 H6.500 Z" fill="#e2e2e3" stroke="none" />
        </svg>
      </button>
    </div>
  </footer>
);

const App: React.FC = () => (
  <div className="flex h-screen flex-col overflow-hidden bg-[#161618] font-['Noto_Sans_CJK_SC',sans-serif] text-xs text-[#dcdcdc]">
    <MenuBar />
    <main className="flex min-h-0 flex-1">
      <nav aria-label="Library" className="flex w-8 shrink-0 flex-col items-start gap-[19px] pl-0.5 pt-[10px]">
        {["历史记录", "模块库"].map((t) => (
          <button key={t} type="button" className="flex w-[22px] justify-center bg-[#0c0c0e] py-[9px] text-white">
            <span className="leading-4 [text-orientation:sideways] [writing-mode:vertical-rl]">{t}</span>
          </button>
        ))}
      </nav>

      <section className="flex min-w-0 flex-1 flex-col">
        <PanelHeader title="Default_Modelist.zprj" />
        <div className="flex min-h-0 flex-1 gap-0.5 pr-0.5">
          <div className="flex w-[76px] shrink-0">
            <Toolbar tools={LEFT_A} label="Garment tools" />
            <Toolbar tools={LEFT_B} label="3D tools" />
          </div>
          <div className="relative my-0.5 flex-1 overflow-hidden bg-[linear-gradient(to_bottom,#88898d_0%,#aaa9af_23%,#bcbbc1_31%,#c9c9ce_39%,#d6d7db_46%,#e0e1e6_51%,#ebebf0_58%,#f2f1f6_65%,#f3f2f7_100%)]">
            <Floor />
            <div className="relative flex flex-col gap-[6px] p-[10px]">
              {PALETTE_3D.map((p, i) => (
                <Palette key={i} items={p} />
              ))}
            </div>
          </div>
        </div>
      </section>

      <section className="ml-[5px] flex min-w-0 flex-1 flex-col">
        <PanelHeader title="2D板片视窗" />
        <div className="flex min-h-0 flex-1 gap-0.5 pl-0.5">
          <div className="relative my-0.5 flex-1 overflow-hidden bg-[#c8c8c8]">
            <PatternGrid />
            <div className="relative px-[10px] py-2">
              <Palette items={PALETTE_2D} />
            </div>
          </div>
          <div className="flex w-[76px] shrink-0">
            <Toolbar tools={RIGHT_A} label="Pattern tools" />
            <Toolbar tools={RIGHT_B} label="Sewing tools" />
          </div>
        </div>
      </section>

      {/* Side panels run slightly past the window edge */}
      <aside className="ml-[5px] w-[335px] shrink-0 overflow-hidden">
        <div className="flex h-full w-[340px] flex-col gap-[5px]">
          <ObjectPanel />
          <section className="flex flex-1 flex-col bg-[#262629]">
            <PanelHeader title="属性编辑器" dock />
          </section>
        </div>
      </aside>
    </main>
    <StatusBar />
  </div>
);

export default App;
